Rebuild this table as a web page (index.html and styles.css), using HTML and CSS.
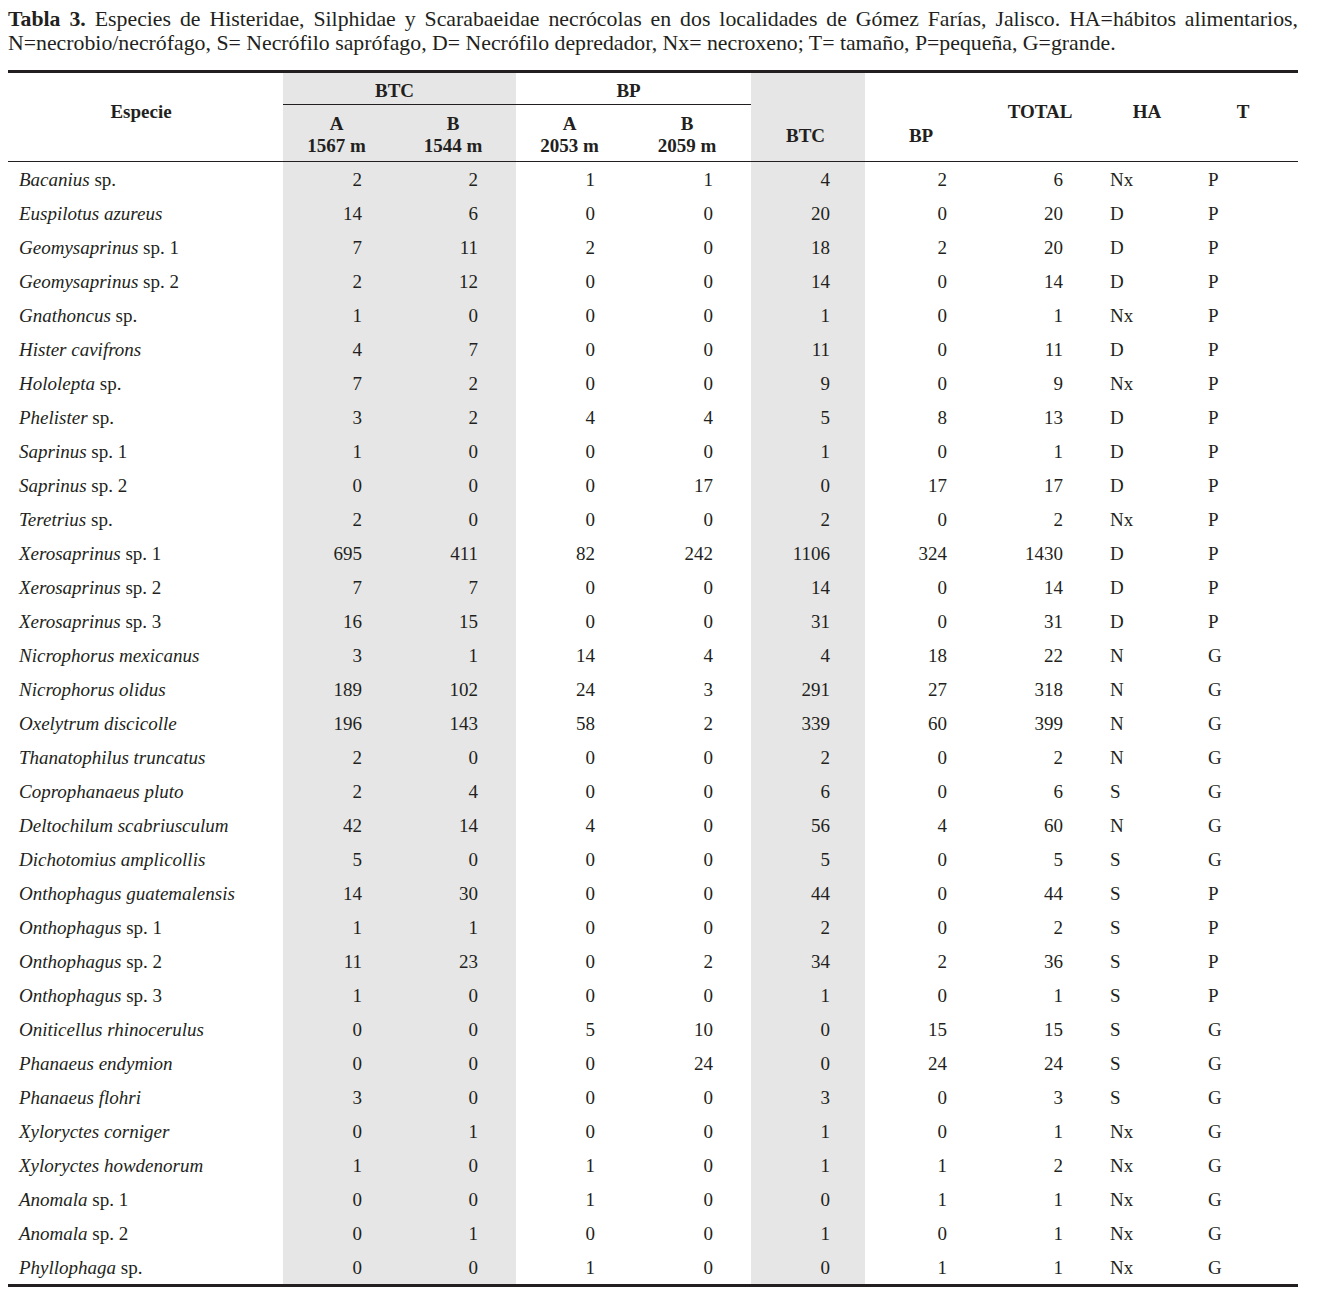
FILE: index.html
```html
<!DOCTYPE html>
<html lang="es">
<head>
<meta charset="utf-8">
<title>Tabla 3</title>
<link rel="stylesheet" href="styles.css">
</head>
<body>
<div class="page">
  <div class="caption">
    <div class="cap-line1"><b>Tabla 3.</b> Especies de Histeridae, Silphidae y Scarabaeidae necrócolas en dos localidades de Gómez Farías, Jalisco. HA=hábitos alimentarios,</div>
    <div class="cap-line2">N=necrobio/necrófago, S= Necrófilo saprófago, D= Necrófilo depredador, Nx= necroxeno; T= tamaño, P=pequeña, G=grande.</div>
  </div>
  <div class="table-wrap">
    <table class="data">
      <colgroup>
        <col class="c-sp"><col class="c-a1"><col class="c-b1"><col class="c-a2"><col class="c-b2"><col class="c-btc"><col class="c-bp"><col class="c-tot"><col class="c-ha"><col class="c-t">
      </colgroup>
      <thead>
        <tr>
          <th rowspan="2" class="h-tall h-species">Especie</th>
          <th colspan="2" class="h-group gray">BTC</th>
          <th colspan="2" class="h-group">BP</th>
          <th rowspan="2" class="h-low gray">BTC</th>
          <th rowspan="2" class="h-low">BP</th>
          <th rowspan="2" class="h-tall">TOTAL</th>
          <th rowspan="2" class="h-tall">HA</th>
          <th rowspan="2" class="h-tall h-size">T</th>
        </tr>
        <tr>
          <th class="h-sub gray">A<br>1567 m</th>
          <th class="h-sub gray">B<br>1544 m</th>
          <th class="h-sub">A<br>2053 m</th>
          <th class="h-sub">B<br>2059 m</th>
        </tr>
      </thead>
      <tbody>
        <tr><td class="sp"><i>Bacanius</i> sp.</td><td class="n gray">2</td><td class="n gray">2</td><td class="n">1</td><td class="n">1</td><td class="n gray nb">4</td><td class="n nt">2</td><td class="n nt">6</td><td class="l">Nx</td><td class="l">P</td></tr>
        <tr><td class="sp"><i>Euspilotus azureus</i></td><td class="n gray">14</td><td class="n gray">6</td><td class="n">0</td><td class="n">0</td><td class="n gray nb">20</td><td class="n nt">0</td><td class="n nt">20</td><td class="l">D</td><td class="l">P</td></tr>
        <tr><td class="sp"><i>Geomysaprinus</i> sp. 1</td><td class="n gray">7</td><td class="n gray">11</td><td class="n">2</td><td class="n">0</td><td class="n gray nb">18</td><td class="n nt">2</td><td class="n nt">20</td><td class="l">D</td><td class="l">P</td></tr>
        <tr><td class="sp"><i>Geomysaprinus</i> sp. 2</td><td class="n gray">2</td><td class="n gray">12</td><td class="n">0</td><td class="n">0</td><td class="n gray nb">14</td><td class="n nt">0</td><td class="n nt">14</td><td class="l">D</td><td class="l">P</td></tr>
        <tr><td class="sp"><i>Gnathoncus</i> sp.</td><td class="n gray">1</td><td class="n gray">0</td><td class="n">0</td><td class="n">0</td><td class="n gray nb">1</td><td class="n nt">0</td><td class="n nt">1</td><td class="l">Nx</td><td class="l">P</td></tr>
        <tr><td class="sp"><i>Hister cavifrons</i></td><td class="n gray">4</td><td class="n gray">7</td><td class="n">0</td><td class="n">0</td><td class="n gray nb">11</td><td class="n nt">0</td><td class="n nt">11</td><td class="l">D</td><td class="l">P</td></tr>
        <tr><td class="sp"><i>Hololepta</i> sp.</td><td class="n gray">7</td><td class="n gray">2</td><td class="n">0</td><td class="n">0</td><td class="n gray nb">9</td><td class="n nt">0</td><td class="n nt">9</td><td class="l">Nx</td><td class="l">P</td></tr>
        <tr><td class="sp"><i>Phelister</i> sp.</td><td class="n gray">3</td><td class="n gray">2</td><td class="n">4</td><td class="n">4</td><td class="n gray nb">5</td><td class="n nt">8</td><td class="n nt">13</td><td class="l">D</td><td class="l">P</td></tr>
        <tr><td class="sp"><i>Saprinus</i> sp. 1</td><td class="n gray">1</td><td class="n gray">0</td><td class="n">0</td><td class="n">0</td><td class="n gray nb">1</td><td class="n nt">0</td><td class="n nt">1</td><td class="l">D</td><td class="l">P</td></tr>
        <tr><td class="sp"><i>Saprinus</i> sp. 2</td><td class="n gray">0</td><td class="n gray">0</td><td class="n">0</td><td class="n">17</td><td class="n gray nb">0</td><td class="n nt">17</td><td class="n nt">17</td><td class="l">D</td><td class="l">P</td></tr>
        <tr><td class="sp"><i>Teretrius</i> sp.</td><td class="n gray">2</td><td class="n gray">0</td><td class="n">0</td><td class="n">0</td><td class="n gray nb">2</td><td class="n nt">0</td><td class="n nt">2</td><td class="l">Nx</td><td class="l">P</td></tr>
        <tr><td class="sp"><i>Xerosaprinus</i> sp. 1</td><td class="n gray">695</td><td class="n gray">411</td><td class="n">82</td><td class="n">242</td><td class="n gray nb">1106</td><td class="n nt">324</td><td class="n nt">1430</td><td class="l">D</td><td class="l">P</td></tr>
        <tr><td class="sp"><i>Xerosaprinus</i> sp. 2</td><td class="n gray">7</td><td class="n gray">7</td><td class="n">0</td><td class="n">0</td><td class="n gray nb">14</td><td class="n nt">0</td><td class="n nt">14</td><td class="l">D</td><td class="l">P</td></tr>
        <tr><td class="sp"><i>Xerosaprinus</i> sp. 3</td><td class="n gray">16</td><td class="n gray">15</td><td class="n">0</td><td class="n">0</td><td class="n gray nb">31</td><td class="n nt">0</td><td class="n nt">31</td><td class="l">D</td><td class="l">P</td></tr>
        <tr><td class="sp"><i>Nicrophorus mexicanus</i></td><td class="n gray">3</td><td class="n gray">1</td><td class="n">14</td><td class="n">4</td><td class="n gray nb">4</td><td class="n nt">18</td><td class="n nt">22</td><td class="l">N</td><td class="l">G</td></tr>
        <tr><td class="sp"><i>Nicrophorus olidus</i></td><td class="n gray">189</td><td class="n gray">102</td><td class="n">24</td><td class="n">3</td><td class="n gray nb">291</td><td class="n nt">27</td><td class="n nt">318</td><td class="l">N</td><td class="l">G</td></tr>
        <tr><td class="sp"><i>Oxelytrum discicolle</i></td><td class="n gray">196</td><td class="n gray">143</td><td class="n">58</td><td class="n">2</td><td class="n gray nb">339</td><td class="n nt">60</td><td class="n nt">399</td><td class="l">N</td><td class="l">G</td></tr>
        <tr><td class="sp"><i>Thanatophilus truncatus</i></td><td class="n gray">2</td><td class="n gray">0</td><td class="n">0</td><td class="n">0</td><td class="n gray nb">2</td><td class="n nt">0</td><td class="n nt">2</td><td class="l">N</td><td class="l">G</td></tr>
        <tr><td class="sp"><i>Coprophanaeus pluto</i></td><td class="n gray">2</td><td class="n gray">4</td><td class="n">0</td><td class="n">0</td><td class="n gray nb">6</td><td class="n nt">0</td><td class="n nt">6</td><td class="l">S</td><td class="l">G</td></tr>
        <tr><td class="sp"><i>Deltochilum scabriusculum</i></td><td class="n gray">42</td><td class="n gray">14</td><td class="n">4</td><td class="n">0</td><td class="n gray nb">56</td><td class="n nt">4</td><td class="n nt">60</td><td class="l">N</td><td class="l">G</td></tr>
        <tr><td class="sp"><i>Dichotomius amplicollis</i></td><td class="n gray">5</td><td class="n gray">0</td><td class="n">0</td><td class="n">0</td><td class="n gray nb">5</td><td class="n nt">0</td><td class="n nt">5</td><td class="l">S</td><td class="l">G</td></tr>
        <tr><td class="sp"><i>Onthophagus guatemalensis</i></td><td class="n gray">14</td><td class="n gray">30</td><td class="n">0</td><td class="n">0</td><td class="n gray nb">44</td><td class="n nt">0</td><td class="n nt">44</td><td class="l">S</td><td class="l">P</td></tr>
        <tr><td class="sp"><i>Onthophagus</i> sp. 1</td><td class="n gray">1</td><td class="n gray">1</td><td class="n">0</td><td class="n">0</td><td class="n gray nb">2</td><td class="n nt">0</td><td class="n nt">2</td><td class="l">S</td><td class="l">P</td></tr>
        <tr><td class="sp"><i>Onthophagus</i> sp. 2</td><td class="n gray">11</td><td class="n gray">23</td><td class="n">0</td><td class="n">2</td><td class="n gray nb">34</td><td class="n nt">2</td><td class="n nt">36</td><td class="l">S</td><td class="l">P</td></tr>
        <tr><td class="sp"><i>Onthophagus</i> sp. 3</td><td class="n gray">1</td><td class="n gray">0</td><td class="n">0</td><td class="n">0</td><td class="n gray nb">1</td><td class="n nt">0</td><td class="n nt">1</td><td class="l">S</td><td class="l">P</td></tr>
        <tr><td class="sp"><i>Oniticellus rhinocerulus</i></td><td class="n gray">0</td><td class="n gray">0</td><td class="n">5</td><td class="n">10</td><td class="n gray nb">0</td><td class="n nt">15</td><td class="n nt">15</td><td class="l">S</td><td class="l">G</td></tr>
        <tr><td class="sp"><i>Phanaeus endymion</i></td><td class="n gray">0</td><td class="n gray">0</td><td class="n">0</td><td class="n">24</td><td class="n gray nb">0</td><td class="n nt">24</td><td class="n nt">24</td><td class="l">S</td><td class="l">G</td></tr>
        <tr><td class="sp"><i>Phanaeus flohri</i></td><td class="n gray">3</td><td class="n gray">0</td><td class="n">0</td><td class="n">0</td><td class="n gray nb">3</td><td class="n nt">0</td><td class="n nt">3</td><td class="l">S</td><td class="l">G</td></tr>
        <tr><td class="sp"><i>Xyloryctes corniger</i></td><td class="n gray">0</td><td class="n gray">1</td><td class="n">0</td><td class="n">0</td><td class="n gray nb">1</td><td class="n nt">0</td><td class="n nt">1</td><td class="l">Nx</td><td class="l">G</td></tr>
        <tr><td class="sp"><i>Xyloryctes howdenorum</i></td><td class="n gray">1</td><td class="n gray">0</td><td class="n">1</td><td class="n">0</td><td class="n gray nb">1</td><td class="n nt">1</td><td class="n nt">2</td><td class="l">Nx</td><td class="l">G</td></tr>
        <tr><td class="sp"><i>Anomala</i> sp. 1</td><td class="n gray">0</td><td class="n gray">0</td><td class="n">1</td><td class="n">0</td><td class="n gray nb">0</td><td class="n nt">1</td><td class="n nt">1</td><td class="l">Nx</td><td class="l">G</td></tr>
        <tr><td class="sp"><i>Anomala</i> sp. 2</td><td class="n gray">0</td><td class="n gray">1</td><td class="n">0</td><td class="n">0</td><td class="n gray nb">1</td><td class="n nt">0</td><td class="n nt">1</td><td class="l">Nx</td><td class="l">G</td></tr>
        <tr><td class="sp"><i>Phyllophaga</i> sp.</td><td class="n gray">0</td><td class="n gray">0</td><td class="n">1</td><td class="n">0</td><td class="n gray nb">0</td><td class="n nt">1</td><td class="n nt">1</td><td class="l">Nx</td><td class="l">G</td></tr>
      </tbody>
    </table>
  </div>
</div>
</body>
</html>
```
FILE: styles.css
```css
html, body {
  margin: 0;
  padding: 0;
  background: #ffffff;
}

body {
  font-family: "Liberation Serif", "Times New Roman", serif;
  color: #231f20;
}

.page {
  width: 1290px;
  padding: 7px 0 0 8px;
}

.caption {
  font-size: 21.8px;
  line-height: 24px;
}

.cap-line1 {
  text-align: justify;
  text-align-last: justify;
  white-space: nowrap;
}

.cap-line2 {
  text-align: left;
}

.table-wrap {
  margin-top: 15px;
  border-top: 3px solid #231f20;
  border-bottom: 3px solid #231f20;
}

.data {
  width: 1290px;
  table-layout: fixed;
  border-collapse: separate;
  border-spacing: 0;
  font-size: 19px;
}

.c-sp { width: 275px; }
.c-a1 { width: 117px; }
.c-b1 { width: 116px; }
.c-a2 { width: 117px; }
.c-b2 { width: 118px; }
.c-btc { width: 114px; }
.c-bp { width: 117px; }
.c-tot { width: 116px; }
.c-ha { width: 98px; }
.c-t { width: 102px; }

th, td {
  padding: 0;
  line-height: 22px;
}

th {
  font-weight: bold;
  text-align: center;
  vertical-align: top;
}

.gray {
  background: #e6e6e6;
}

.h-group {
  padding-top: 7px;
  padding-bottom: 2px;
  padding-right: 10px;
  border-bottom: 1px solid #231f20;
}

.h-sub {
  padding-top: 8px;
  padding-bottom: 4px;
  padding-right: 10px;
  border-bottom: 1px solid #231f20;
}

.h-tall {
  padding-top: 28px;
  border-bottom: 1px solid #231f20;
}

.h-species {
  padding-right: 9px;
}

.h-size {
  padding-right: 8px;
}

.h-low {
  padding-top: 52px;
  padding-right: 5px;
  border-bottom: 1px solid #231f20;
}

td {
  padding-top: 7px;
  padding-bottom: 5px;
  white-space: nowrap;
}

.sp {
  padding-left: 11px;
  text-align: left;
}

.n {
  text-align: right;
  padding-right: 38px;
}

.n.nb,
.n.nt {
  padding-right: 35px;
}

.l {
  text-align: left;
  padding-left: 12px;
}
```
